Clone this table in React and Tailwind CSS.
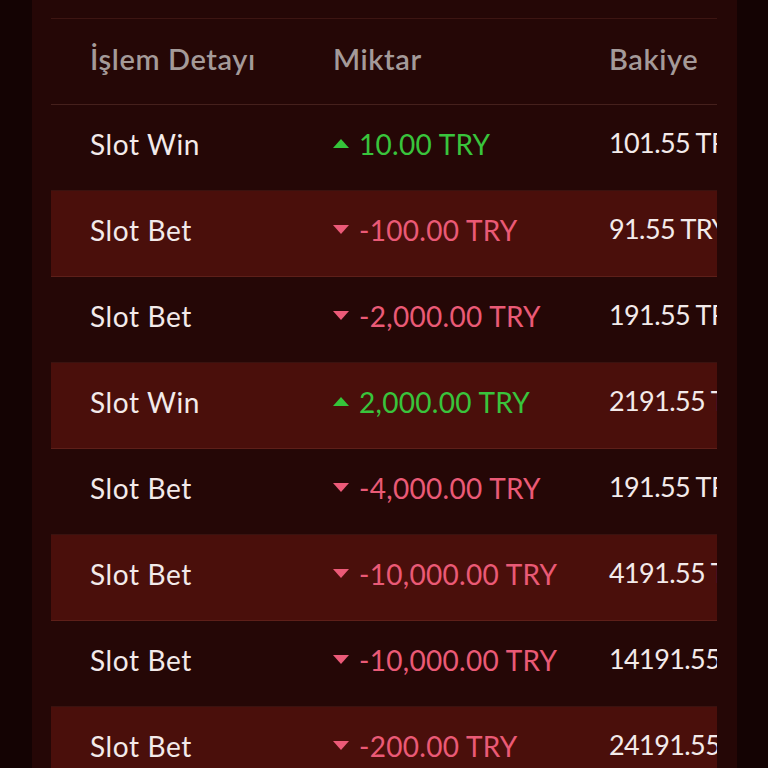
const ROWS = [
  { detay: 'Slot Win', miktar: '10.00 TRY', up: true, bakiye: '101.55 TRY' },
  { detay: 'Slot Bet', miktar: '-100.00 TRY', up: false, bakiye: '91.55 TRY' },
  { detay: 'Slot Bet', miktar: '-2,000.00 TRY', up: false, bakiye: '191.55 TRY' },
  { detay: 'Slot Win', miktar: '2,000.00 TRY', up: true, bakiye: '2191.55 TRY' },
  { detay: 'Slot Bet', miktar: '-4,000.00 TRY', up: false, bakiye: '191.55 TRY' },
  { detay: 'Slot Bet', miktar: '-10,000.00 TRY', up: false, bakiye: '4191.55 TRY' },
  { detay: 'Slot Bet', miktar: '-10,000.00 TRY', up: false, bakiye: '14191.55 TRY' },
  { detay: 'Slot Bet', miktar: '-200.00 TRY', up: false, bakiye: '24191.55 TRY' },
]

function Arrow({ up }) {
  return up ? (
    <svg width="16" height="9" viewBox="0 0 16 9" className="shrink-0">
      <path d="M8 0 L16 9 L0 9 Z" fill="#35c43a" />
    </svg>
  ) : (
    <svg width="16" height="9" viewBox="0 0 16 9" className="shrink-0">
      <path d="M0 0 L16 0 L8 9 Z" fill="#ec5a78" />
    </svg>
  )
}

export default function App() {
  return (
    <div
      className="h-[768px] w-[768px] overflow-hidden bg-[#140303] flex"
      style={{ fontFamily: 'Lato, "Open Sans", sans-serif' }}
    >
      <div className="ml-[32px] w-[705px] h-full bg-[#250706] pt-[18px] pl-[19px] pr-[20px]">
        <div className="w-[666px] overflow-hidden border-t border-[#3d1512]">
          {/* ── Header ── */}
          <div className="flex h-[86px] items-center pb-[6px] border-b border-[#45201c] text-[29px] font-semibold tracking-[0.6px] text-[#a49a99] whitespace-nowrap">
            <div className="w-[282px] pl-[39px]">İşlem Detayı</div>
            <div className="w-[276px]">Miktar</div>
            <div>Bakiye</div>
          </div>

          {/* ── Rows ── */}
          {ROWS.map((r, i) => (
            <div
              key={i}
              className={`flex h-[86px] items-center pb-[8px] border-b whitespace-nowrap text-[28px] ${
                i % 2 === 1 ? 'bg-[#4a0f0b] border-[#5e1f19]' : 'border-[#3a120f]'
              }`}
            >
              <div className="w-[282px] shrink-0 pl-[39px] tracking-[0.6px] text-[#f3eaea]">{r.detay}</div>
              <div className={`w-[276px] shrink-0 flex items-center gap-[10px] tracking-[0.3px] ${r.up ? 'text-[#39c43c]' : 'text-[#ea5a76]'}`}>
                <Arrow up={r.up} />
                <span>{r.miktar}</span>
              </div>
              <div className="shrink-0 text-[27px] tracking-[-0.6px] text-[#f3eaea]">{r.bakiye}</div>
            </div>
          ))}
        </div>
      </div>
    </div>
  )
}
